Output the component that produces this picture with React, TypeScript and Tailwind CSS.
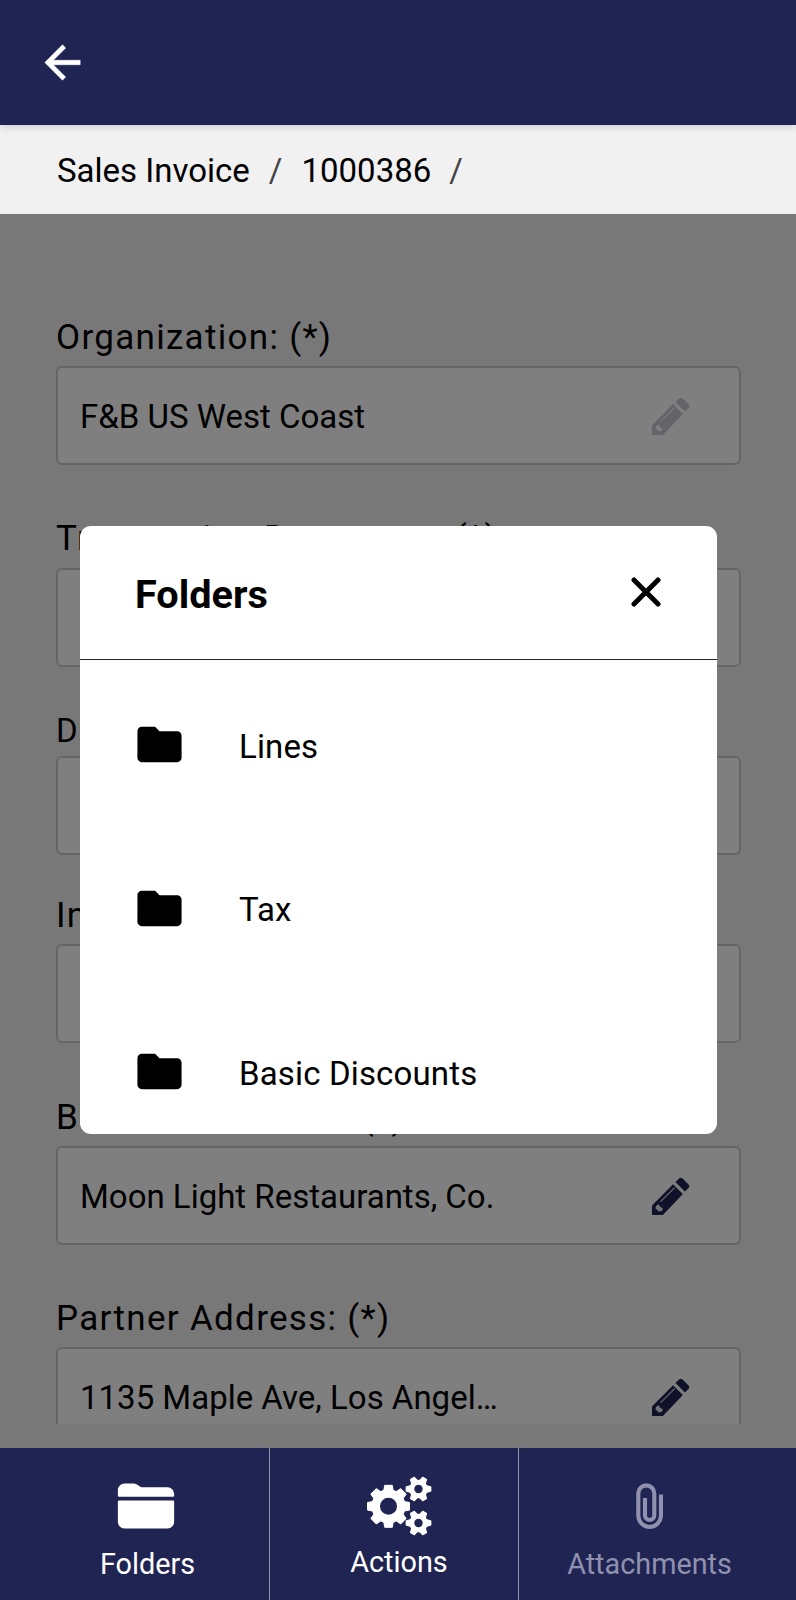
import React from "react";
import { MdFolder } from "react-icons/md";
import { IoFolder } from "react-icons/io5";

function BackArrow() {
  return (
    <svg viewBox="0 0 24 24" className="size-[53px]" fill="currentColor" stroke="currentColor" strokeWidth="0.25">
      <path d="M20 11H7.83l5.59-5.59L12 4l-8 8 8 8 1.41-1.41L7.83 13H20z" />
    </svg>
  );
}

function Pencil({ className }: { className: string }) {
  return (
    <svg viewBox="0 0 112 112" className={className} fill="#202452">
      <path d="M0 112V84L62 21L91 50L32 112Z" />
      <path d="M69 15L79 5Q85 -1 91 5L107 21Q113 27 107 33L97 43Z" />
      <path d="M26 72L66 32" stroke="#d4d4de" strokeWidth="3.5" strokeLinecap="round" />
      <path d="M13 84L20 80L24 88L32 92L29 100L20 102L10 92Z" fill="#e6e6ee" />
    </svg>
  );
}

function Close() {
  return (
    <svg viewBox="0 0 30 30" className="mb-[2px] size-[30px]" stroke="#000" strokeWidth="5" strokeLinecap="round">
      <path d="M3 3L27 27M27 3L3 27" />
    </svg>
  );
}

function Paperclip() {
  return (
    <svg viewBox="0 0 27 46" className="h-[46px] w-[27px]" fill="none" stroke="currentColor" strokeWidth="4.1">
      <path d="M25 11.5V32.6A11.35 11.35 0 0 1 2.3 32.6V10.4A8 8 0 0 1 18.3 10.4V32.2A4.65 4.65 0 0 1 9 32.2V15" />
    </svg>
  );
}

type GearProps = { cx: number; cy: number; teeth: number; body: number; outer: number; hole: number; base: number; tip: number };

function Gear({ cx, cy, teeth, body, outer, hole, base, tip }: GearProps) {
  return (
    <g transform={`translate(${cx} ${cy})`}>
      <circle r={(body + hole) / 2} fill="none" stroke="currentColor" strokeWidth={body - hole} />
      {Array.from({ length: teeth }, (_, i) => (
        <path
          key={i}
          transform={`rotate(${(i * 360) / teeth})`}
          d={`M${body - 3} ${-base}L${outer} ${-tip}V${tip}L${body - 3} ${base}Z`}
          fill="currentColor"
          stroke="currentColor"
          strokeWidth="1"
          strokeLinejoin="round"
        />
      ))}
    </g>
  );
}

function Gears() {
  return (
    <svg viewBox="0 0 65 60" className="h-[60px] w-[65px]">
      <Gear cx={21.5} cy={30.3} teeth={8} body={17} outer={21} hole={8.5} base={5} tip={3.8} />
      <Gear cx={51.5} cy={13} teeth={6} body={9.3} outer={12.4} hole={4.2} base={3.8} tip={2.2} />
      <Gear cx={51.5} cy={47} teeth={6} body={9.3} outer={12.4} hole={4.2} base={3.8} tip={2.2} />
    </svg>
  );
}

type FieldProps = { label: string; value?: string; disabled?: boolean; className: string; labelClass?: string };

function Field({ label, value, disabled, className, labelClass = "text-[35px] mb-[7px]" }: FieldProps) {
  return (
    <div className={`flex shrink-0 flex-col justify-end ${className}`}>
      <span className={`whitespace-nowrap leading-[42px] tracking-[1.3px] ${labelClass}`}>{label}</span>
      <div className="flex h-[99px] shrink-0 items-center justify-between rounded-[6px] border-2 border-[#cbcbcb] bg-white pl-[22px] pr-[49px]">
        <span className="pt-[3px] text-[33px] leading-[40px]">{value}</span>
        <Pencil className={disabled ? "size-[38px] opacity-25" : "size-[38px]"} />
      </div>
    </div>
  );
}

function FolderRow({ name }: { name: string }) {
  return (
    <li className="flex h-[163.5px] shrink-0 items-center">
      <MdFolder className="mb-[2px] size-[53px]" />
      <span className="ml-[53px] pt-[2px] text-[33px] leading-[40px] tracking-[0.15px]">{name}</span>
    </li>
  );
}

export default function App() {
  return (
    <div className="flex h-[1600px] w-[796px] flex-col overflow-hidden bg-[#f1f1f1] font-['Roboto',sans-serif] text-black">
      <header className="z-10 flex h-[125px] shrink-0 items-center bg-[#202452] pl-[36px] text-white shadow-[0_2px_8px_rgba(0,0,0,0.15)]">
        <BackArrow />
      </header>
      <nav className="flex h-[89px] shrink-0 items-center whitespace-pre bg-[#f1f1f1] pl-[57px] pt-[3px] text-[33px]">
        <span>Sales Invoice</span>
        <span className="ml-[19px] text-[#444]">/</span>
        <span className="ml-[19px]">1000386</span>
        <span className="ml-[18px] text-[#444]">/</span>
      </nav>
      <main className="relative h-[1234px] shrink-0">
        <div className="flex h-[1210px] flex-col overflow-hidden pl-[56px] pr-[55px]">
          <Field className="h-[251px]" label="Organization: (*)" value="F&B US West Coast" disabled />
          <Field className="h-[201.5px]" label="Transaction Document: (*)" labelClass="text-[35px] mb-[8px]" />
          <Field className="h-[188.5px]" label="Document No:" labelClass="text-[33px] mb-[4px]" />
          <Field className="h-[188px]" label="Invoice Date:" />
          <Field className="h-[202px]" label="Business Partner: (*)" value="Moon Light Restaurants, Co." />
          <Field className="h-[201px]" label="Partner Address: (*)" value="1135 Maple Ave, Los Angel…" />
        </div>
        <div className="absolute inset-0 flex items-start justify-center bg-black/50 pl-px pt-[312px]">
          <section className="flex h-[608px] w-[637px] flex-col overflow-hidden rounded-[11px] bg-white">
            <div className="flex h-[134px] shrink-0 items-center justify-between border-b border-[#222] pl-[55px] pr-[56px]">
              <h2 className="pt-[5px] text-[39.7px] font-bold">Folders</h2>
              <Close />
            </div>
            <ul className="flex flex-col pl-[53px] pt-[4px]">
              <FolderRow name="Lines" />
              <FolderRow name="Tax" />
              <FolderRow name="Basic Discounts" />
            </ul>
          </section>
        </div>
      </main>
      <footer className="flex h-[152px] shrink-0 bg-[#202452] text-[28.8px] leading-[36px] text-white">
        <button className="flex w-[270px] flex-col items-center border-r border-[#9193a9] pl-[26px] pt-[28px]">
          <IoFolder className="mr-[3px] size-[60px]" />
          <span className="mt-[10px]">Folders</span>
        </button>
        <button className="flex w-[249px] flex-col items-center border-r border-[#9193a9] pl-[10px] pt-[28px]">
          <Gears />
          <span className="mt-[8px]">Actions</span>
        </button>
        <button className="flex flex-1 flex-col items-center pr-[16px] pt-[35px] text-[#8f91af]">
          <Paperclip />
          <span className="mt-[17px]">Attachments</span>
        </button>
      </footer>
    </div>
  );
}
